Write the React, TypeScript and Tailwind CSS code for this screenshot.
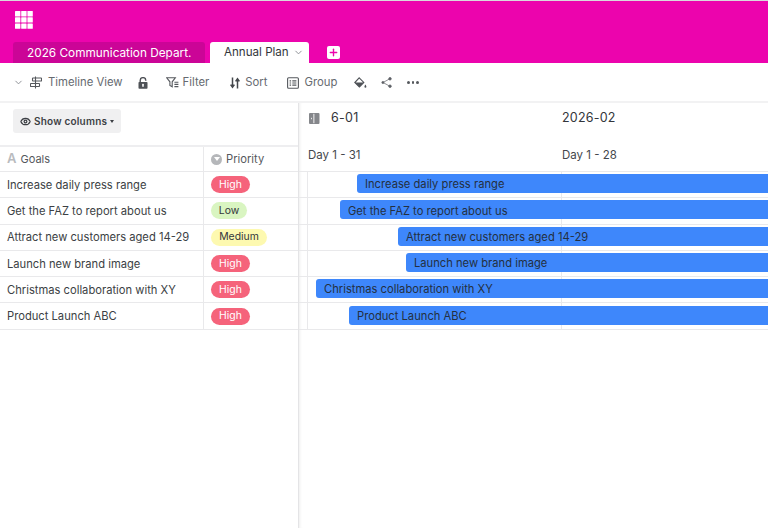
import { ChevronDown, Eye, Plus } from "lucide-react";

const rows = [
  { goal: "Increase daily press range", priority: "High", offset: "ml-[58px]" },
  { goal: "Get the FAZ to report about us", priority: "Low", offset: "ml-[41px]" },
  { goal: "Attract new customers aged 14-29", priority: "Medium", offset: "ml-[99px]" },
  { goal: "Launch new brand image", priority: "High", offset: "ml-[107px]" },
  { goal: "Christmas collaboration with XY", priority: "High", offset: "ml-[17px]" },
  { goal: "Product Launch ABC", priority: "High", offset: "ml-[50px]" },
];

const badgeStyles: Record<string, string> = {
  High: "bg-[#f5637b] text-white w-[39px]",
  Low: "bg-[#d9f5c1] text-[#33363b] w-[36px]",
  Medium: "bg-[#fdf9b0] text-[#33363b] w-[56px]",
};

const AppsIcon = () => (
  <svg width="18" height="18" viewBox="0 0 18 18" fill="white">
    {[0, 6.2, 12.4].map((y) =>
      [0, 6.2, 12.4].map((x) => (
        <rect key={`${x}-${y}`} x={x} y={y} width="5.4" height="5.4" rx="0.5" />
      )),
    )}
  </svg>
);

const TimelineIcon = () => (
  <svg width="12" height="13" viewBox="0 0 12 13" fill="none" stroke="#55585d" strokeWidth="1.1">
    <path d="M5.5 0.5v12" />
    <rect x="2.5" y="2" width="9" height="3" rx="0.5" />
    <rect x="0.5" y="7.5" width="9" height="3" rx="0.5" />
  </svg>
);

const LockIcon = () => (
  <svg width="10" height="12" viewBox="0 0 10 12">
    <path d="M2.2 5.5V3.4a2.8 2.8 0 0 1 5.6 0v.4" fill="none" stroke="#4f5257" strokeWidth="1.4" />
    <rect x="0.5" y="5" width="9" height="6.8" rx="0.8" fill="#4f5257" />
    <rect x="4.2" y="6.8" width="1.6" height="3" rx="0.5" fill="white" />
  </svg>
);

const FilterIcon = () => (
  <svg width="13" height="11" viewBox="0 0 13 11" fill="none" stroke="#55585d" strokeWidth="1.1">
    <path d="M0.7 0.8h8.6L6.2 4.8v5L3.9 8.4V4.8z" />
    <path d="M8.4 5.2h4M8.4 7.4h4M8.4 9.6h4" />
  </svg>
);

const SortIcon = () => (
  <svg width="10" height="12" viewBox="0 0 10 12" fill="none" stroke="#44474c" strokeWidth="1.5">
    <path d="M2.5 0.5v9.5M0.6 7.6l1.9 2.6 1.9-2.6" />
    <path d="M7.5 11.5V2M5.6 4.4l1.9-2.6 1.9 2.6" />
  </svg>
);

const GroupIcon = () => (
  <svg width="12" height="12" viewBox="0 0 12 12" fill="none" stroke="#55585d" strokeWidth="1.1">
    <rect x="0.6" y="0.8" width="10.8" height="10.4" rx="1" />
    <path d="M2.6 3.9h1.5M5.3 3.9h4.1M2.6 6h1.5M5.3 6h4.1M2.6 8.1h1.5M5.3 8.1h4.1" />
  </svg>
);

const PaintIcon = () => (
  <svg width="13" height="12" viewBox="0 0 13 12" fill="#4f5257">
    <path d="M5.2 0.8l4.6 4.6-4.4 4.6L0.8 5.5z" fill="none" stroke="#4f5257" strokeWidth="1.1" />
    <path d="M0.9 5.4h8.8l-4.3 4.6z" />
    <path d="M11.4 7.6c.6.9 1 1.5 1 2.1a1 1 0 0 1-2 0c0-.6.4-1.2 1-2.1z" />
  </svg>
);

const ShareIcon = () => (
  <svg width="11" height="11" viewBox="0 0 11 11" fill="#5f6267" stroke="#5f6267" strokeWidth="0.7">
    <path d="M8.8 1.8L2 5.5l6.8 3.7" fill="none" />
    <circle cx="1.9" cy="5.5" r="1.1" />
    <circle cx="9" cy="1.8" r="1.3" />
    <circle cx="9" cy="9.2" r="1.3" />
  </svg>
);

const ToolItem = ({ icon, label, className }: { icon: React.ReactNode; label: string; className: string }) => (
  <div className={`flex items-center ${className}`}>
    {icon}
    <span className="text-[11.3px] text-[#666a70]">{label}</span>
  </div>
);

export default function App() {
  return (
    <div className="w-[768px] h-[528px] overflow-hidden flex flex-col bg-white font-['Inter','Liberation_Sans',sans-serif] text-[#33363b]">
      {/* Pink header with base tabs */}
      <div className="h-[63px] shrink-0 bg-[#ec04ad] border-t border-[#d9d9dc] flex flex-col justify-between">
        <div className="pl-[15px] pt-[10px]">
          <AppsIcon />
        </div>
        <div className="flex items-end pl-[13px]">
          <div className="w-[192px] h-[21px] rounded-t-[3px] bg-[#cb0597] text-white text-[11.8px] leading-[23px] pl-[14px] whitespace-nowrap">
            2026 Communication Depart.
          </div>
          <div className="ml-[5px] w-[99px] h-[21px] rounded-t-[3px] bg-white text-[11.6px] leading-[23px] pl-[14px] flex items-center gap-[4px]">
            Annual Plan
            <ChevronDown size={11} className="text-[#888b90]" />
          </div>
          <div className="ml-[18px] mb-[4px] w-[13px] h-[13px] rounded-[2px] bg-white flex items-center justify-center">
            <Plus size={11} strokeWidth={3} className="text-[#ec04ad]" />
          </div>
        </div>
      </div>

      {/* Toolbar */}
      <div className="h-[40px] shrink-0 border-b-2 border-[#f2f2f3] flex items-center pl-[13px] pt-[1px]">
        <ChevronDown size={11} className="text-[#888b90]" />
        <ToolItem className="ml-[6px] gap-[6px]" icon={<TimelineIcon />} label="Timeline View" />
        <div className="ml-[15px]">
          <LockIcon />
        </div>
        <ToolItem className="ml-[18px] gap-[4px]" icon={<FilterIcon />} label="Filter" />
        <ToolItem className="ml-[21px] gap-[5px]" icon={<SortIcon />} label="Sort" />
        <ToolItem className="ml-[20px] gap-[5px]" icon={<GroupIcon />} label="Group" />
        <div className="ml-[17px]">
          <PaintIcon />
        </div>
        <div className="ml-[14px]">
          <ShareIcon />
        </div>
        <div className="ml-[15px] flex gap-[2px]">
          <span className="w-[2.5px] h-[2.5px] rounded-full bg-[#55585d]" />
          <span className="w-[2.5px] h-[2.5px] rounded-full bg-[#55585d]" />
          <span className="w-[2.5px] h-[2.5px] rounded-full bg-[#55585d]" />
        </div>
      </div>

      <div className="flex-1 flex min-h-0">
        {/* Left table */}
        <div className="w-[298px] shrink-0 flex flex-col">
          <div className="h-[44px] pt-[6px] pl-[13px] border-b-2 border-[#eeeef0] shrink-0">
            <div className="w-[108px] h-[24px] rounded-[3px] bg-[#f0f0f1] flex items-center pl-[7px] gap-[3px] text-[10px] font-semibold tracking-[0.2px] text-[#3c3f44]">
              <Eye size={11} strokeWidth={2.6} />
              Show columns
              <span className="border-x-[2.5px] border-x-transparent border-t-[3px] border-t-[#3c3f44]" />
            </div>
          </div>
          <div className="h-[25px] flex border-b border-[#e9e9eb] shrink-0">
            <div className="w-[204px] border-r border-[#e9e9eb] flex items-center pl-[7px] gap-[4px] text-[11px] text-[#55585d]">
              <span className="text-[13px] font-semibold text-[#b9bbbe]">A</span>
              Goals
            </div>
            <div className="flex-1 flex items-center pl-[7px] gap-[4px] text-[11.2px] text-[#55585d]">
              <span className="w-[11px] h-[11px] rounded-full bg-[#b5b7ba] flex items-center justify-center">
                <span className="border-x-[3.5px] border-x-transparent border-t-[4px] border-t-white" />
              </span>
              Priority
            </div>
          </div>
          {rows.map((row) => (
            <div key={row.goal} className="h-[26.3px] flex border-b border-[#e9e9eb] shrink-0">
              <div className="w-[204px] border-r border-[#e9e9eb] flex items-center pl-[7px] pt-[1px] text-[11.2px] text-[#3c3f44] whitespace-nowrap">
                {row.goal}
              </div>
              <div className="flex-1 flex items-center pl-[7px]">
                <span className={`h-[17px] rounded-full flex items-center justify-center text-[10.4px] ${badgeStyles[row.priority]}`}>
                  {row.priority}
                </span>
              </div>
            </div>
          ))}
        </div>

        {/* Timeline */}
        <div className="flex-1 relative min-w-0 border-l border-[#e4e4e6] shadow-[inset_3px_0_3px_-2px_rgba(0,0,0,0.07)] overflow-hidden">
          <div className="h-[44px] flex items-center pb-[14px]">
            <div className="w-[263px] flex items-center pl-[10px] gap-[11px]">
              <svg width="11" height="11" viewBox="0 0 11 11">
                <rect width="10.5" height="11" rx="1" fill="#85878b" />
                <rect x="4.3" y="0.8" width="1.1" height="9.4" fill="#e8e8ea" />
                <rect x="2" y="4.8" width="1" height="1.4" fill="#e8e8ea" />
              </svg>
              <span className="text-[12.5px] tracking-[0.3px]">6-01</span>
            </div>
            <span className="text-[12.5px] tracking-[0.2px]">2026-02</span>
          </div>
          <div className="h-[25px] flex items-start text-[11.5px] text-[#44474c] border-b border-[#e9e9eb]">
            <span className="w-[263px] pl-[9px]">Day 1 - 31</span>
            <span>Day 1 - 28</span>
          </div>
          {rows.map((row) => (
            <div key={row.goal} className="h-[26.3px] flex items-center pb-[2px] border-b border-[#e9e9eb]">
              <div className={`relative z-10 h-[19px] flex-1 rounded-l-[3px] bg-[#3e87fb] flex items-center pl-[8px] pt-[2px] text-[11.2px] text-[#24303f] whitespace-nowrap ${row.offset}`}>
                {row.goal}
              </div>
            </div>
          ))}
          {/* month grid lines */}
          <div className="absolute left-[8px] top-[69px] h-[158px] w-px bg-[#e9e9eb]" />
          <div className="absolute left-[262px] top-[69px] h-[158px] w-px bg-[#e9e9eb]" />
        </div>
      </div>
    </div>
  );
}
